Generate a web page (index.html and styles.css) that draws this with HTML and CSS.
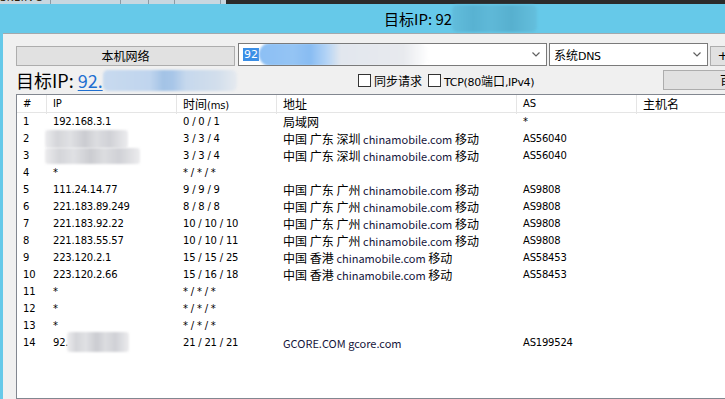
FILE: index.html
```html
<!DOCTYPE html>
<html>
<head>
<meta charset="utf-8">
<link rel="stylesheet" href="styles.css">
</head>
<body>
<div class="screen">
  <div class="strip">
    <div class="strip-l">
      <div class="sc w1"><span class="strip-txt">SKEIIVG</span></div>
      <div class="sc w2"></div>
      <div class="sc w3"></div>
      <div class="sc w4"></div>
      <div class="sc w5"></div>
    </div>
    <div class="strip-r"></div>
  </div>
  <div class="titlebar"><span class="title">目标IP: 92</span><span class="blob tblob"></span></div>
  <div class="frame">
    <div class="client">
      <div class="row1">
        <button class="btn wide">本机网络</button>
        <div class="combo c1"><span class="sel">92</span><span class="blob cblob"></span><svg class="arrow" width="8" height="5" viewBox="0 0 8 5"><polyline points="0.5,0.5 4,4 7.5,0.5" fill="none" stroke="#606060" stroke-width="1.2"/></svg></div>
        <div class="combo c2"><span class="ctext">系统<span class="lat">DNS</span></span><svg class="arrow" width="8" height="5" viewBox="0 0 8 5"><polyline points="0.5,0.5 4,4 7.5,0.5" fill="none" stroke="#606060" stroke-width="1.2"/></svg></div>
        <button class="btn plus">+</button>
      </div>
      <div class="row2">
        <div class="target">目标IP: <span class="link">92.</span><span class="blob lblob"></span></div>
        <label class="chk first"><span class="box"></span><span>同步请求</span></label>
        <label class="chk"><span class="box"></span><span><span class="lat">TCP(80</span>端口<span class="lat">,IPv4)</span></span></label>
        <button class="btn go">百</button>
      </div>
      <div class="list">
        <div class="grid head">
          <div class="c">#</div><div class="c">IP</div><div class="c"><span class="cjk">时间</span>(ms)</div><div class="c cjk">地址</div><div class="c">AS</div><div class="c cjk">主机名</div>
        </div>
        <div class="grid row"><div>1</div><div>192.168.3.1</div><div>0 / 0 / 1</div><div class="addr">局域网</div><div>*</div><div></div></div>
        <div class="grid row"><div>2</div><div><span class="blob ipblob b2"></span></div><div>3 / 3 / 4</div><div class="addr">中国 广东 深圳 <span class="en">chinamobile.com</span> 移动</div><div>AS56040</div><div></div></div>
        <div class="grid row"><div>3</div><div><span class="blob ipblob b3"></span></div><div>3 / 3 / 4</div><div class="addr">中国 广东 深圳 <span class="en">chinamobile.com</span> 移动</div><div>AS56040</div><div></div></div>
        <div class="grid row"><div>4</div><div>*</div><div>* / * / *</div><div class="addr"></div><div></div><div></div></div>
        <div class="grid row"><div>5</div><div>111.24.14.77</div><div>9 / 9 / 9</div><div class="addr">中国 广东 广州 <span class="en">chinamobile.com</span> 移动</div><div>AS9808</div><div></div></div>
        <div class="grid row"><div>6</div><div>221.183.89.249</div><div>8 / 8 / 8</div><div class="addr">中国 广东 广州 <span class="en">chinamobile.com</span> 移动</div><div>AS9808</div><div></div></div>
        <div class="grid row"><div>7</div><div>221.183.92.22</div><div>10 / 10 / 10</div><div class="addr">中国 广东 广州 <span class="en">chinamobile.com</span> 移动</div><div>AS9808</div><div></div></div>
        <div class="grid row"><div>8</div><div>221.183.55.57</div><div>10 / 10 / 11</div><div class="addr">中国 广东 广州 <span class="en">chinamobile.com</span> 移动</div><div>AS9808</div><div></div></div>
        <div class="grid row"><div>9</div><div>223.120.2.1</div><div>15 / 15 / 25</div><div class="addr">中国 香港 <span class="en">chinamobile.com</span> 移动</div><div>AS58453</div><div></div></div>
        <div class="grid row"><div>10</div><div>223.120.2.66</div><div>15 / 16 / 18</div><div class="addr">中国 香港 <span class="en">chinamobile.com</span> 移动</div><div>AS58453</div><div></div></div>
        <div class="grid row"><div>11</div><div>*</div><div>* / * / *</div><div class="addr"></div><div></div><div></div></div>
        <div class="grid row"><div>12</div><div>*</div><div>* / * / *</div><div class="addr"></div><div></div><div></div></div>
        <div class="grid row"><div>13</div><div>*</div><div>* / * / *</div><div class="addr"></div><div></div><div></div></div>
        <div class="grid row"><div>14</div><div>92.<span class="blob ipblob b14"></span></div><div>21 / 21 / 21</div><div class="addr"><span class="en">GCORE.COM gcore.com</span></div><div>AS199524</div><div></div></div>
      </div>
    </div>
  </div>
</div>
</body>
</html>
```

FILE: styles.css
```css
* { box-sizing: border-box; }
html, body { margin: 0; padding: 0; }
body { background: #f0f0f0; }
.screen {
  width: 725px;
  height: 399px;
  overflow: hidden;
  display: flex;
  flex-direction: column;
  font-family: "Noto Sans CJK SC", sans-serif;
  color: #000;
}
.strip { height: 4px; display: flex; flex: none; }
.strip-l { width: 226px; background: #c8d7e0; display: flex; }
.strip-r { flex: 1; background: #2b2b2b; }
.sc { height: 4px; border-right: 1px solid #8c9ba5; overflow: hidden; }
.w1 { width: 51px; }
.w2 { width: 70px; }
.w3 { width: 28px; }
.w4 { width: 26px; }
.w5 { width: 46px; }
.strip-txt {
  display: block;
  font-family: "DejaVu Sans", sans-serif;
  font-size: 10px;
  line-height: 10px;
  margin-top: -7px;
  color: #2a1a08;
  letter-spacing: 0.5px;
}
.titlebar {
  height: 29px;
  flex: none;
  background: #66c9e9;
  display: flex;
  align-items: center;
  padding-left: 384px;
}
.title { font-size: 15px; line-height: 20px; color: #000; }
.blob { display: inline-block; filter: blur(1.3px); border-radius: 5px; }
.tblob {
  width: 85px;
  height: 27px;
  background: linear-gradient(90deg, #62bddc 0%, #58b2d2 25%, #5fb9d8 45%, #57b0cf 70%, #64bfdd 100%);
}
.frame {
  flex: 1;
  display: flex;
  background: #66c9e9;
  padding-left: 3px;
  min-height: 0;
}
.client {
  flex: 1;
  background: #f0f0f0;
  border-top: 1px solid #a3a9ad;
  padding: 9px 0 0 13px;
  overflow: hidden;
  display: flex;
  flex-direction: column;
}
.row1 { display: flex; align-items: flex-end; height: 23px; flex: none; }
.btn {
  font-family: "Noto Sans CJK SC", sans-serif;
  font-size: 12px;
  color: #000;
  background: #e1e1e1;
  border: 1px solid #adadad;
  height: 20px;
  padding: 0;
  line-height: 16px;
  flex: none;
}
.btn.wide { width: 219px; margin-right: 3px; }
.combo {
  height: 23px;
  border: 1px solid #7a7a7a;
  background: #fff;
  display: flex;
  align-items: center;
  padding: 0 6px 0 4px;
  flex: none;
  overflow: hidden;
}
.c1 { width: 309px; margin-right: 2px; }
.c2 { width: 159px; margin-right: 2px; }
.sel {
  background: #3a8ee6;
  color: #fff;
  font-family: "DejaVu Sans", sans-serif;
  font-size: 11px;
  line-height: 13px;
  padding: 0 1px;
}
.cblob {
  width: 170px;
  height: 23px;
  background: linear-gradient(90deg, #8cbff4 0%, #94c4f4 20%, #88bcf2 30%, #b4d4f6 40%, #e2e7ee 48%, #e8eaee 85%, rgba(255,255,255,0) 100%);
  border-radius: 11px;
}
.arrow { margin-left: auto; flex: none; }
.ctext { font-size: 12px; }
.lat { font-family: "DejaVu Sans", sans-serif; font-size: 11px; letter-spacing: -0.3px; }
.btn.plus { width: 26px; font-family: "DejaVu Sans", sans-serif; font-size: 13px; }
.row2 { display: flex; align-items: center; height: 28px; flex: none; }
.target { width: 342px; font-size: 18px; line-height: 24px; flex: none; display: flex; align-items: center; white-space: pre; }
.link { color: #1f6fd0; text-decoration: underline; text-decoration-thickness: 1px; text-underline-offset: 2px; }
.lblob {
  width: 134px;
  height: 21px;
  background: linear-gradient(90deg, #c8daef 0%, #c0d5ee 35%, #a3c3e6 45%, #a8c6e8 52%, #c6d8ed 62%, #d2deec 85%, #e6eaef 100%);
}
.chk { display: flex; align-items: center; font-size: 12px; gap: 3px; flex: none; white-space: nowrap; }
.chk.first { margin-right: 6px; }
.box { width: 13px; height: 13px; border: 1px solid #333; background: #fff; display: inline-block; }
.btn.go { width: 126px; margin-left: auto; margin-right: -64px; height: 20px; }
.list {
  flex: 1;
  width: 730px;
  border: 1px solid #828790;
  background: #fff;
  font-family: "DejaVu Sans", sans-serif;
  font-size: 10px;
  letter-spacing: -0.2px;
}
.grid { display: grid; grid-template-columns: 30px 130px 100px 240px 120px 1fr; }
.head { height: 18px; border-bottom: 1px solid #e5e5e5; }
.head .c { border-right: 1px solid #e5e5e5; padding-left: 6px; line-height: 17px; white-space: nowrap; }
.cjk { font-family: "Noto Sans CJK SC", sans-serif; font-size: 12px; letter-spacing: 0; }
.row { height: 17px; line-height: 17px; }
.row > div { padding-left: 6px; white-space: nowrap; overflow: visible; }
.addr { font-family: "Noto Sans CJK SC", sans-serif; font-size: 12px; letter-spacing: 0; }
.en { font-size: 11px; color: #14143a; }
.ipblob {
  vertical-align: top;
  background: linear-gradient(90deg, #ececee 0%, #d4d5d9 15%, #e0e1e4 30%, #cbccd1 48%, #dcdde0 62%, #d0d1d6 78%, #ececee 100%);
  border-radius: 3px;
}
.b2 { width: 83px; height: 18px; margin-left: -8px; margin-top: 0; }
.b3 { width: 95px; height: 16px; margin-left: -8px; margin-top: 1px; }
.b14 { width: 62px; height: 20px; margin-left: -1px; margin-top: -2px; }
```
